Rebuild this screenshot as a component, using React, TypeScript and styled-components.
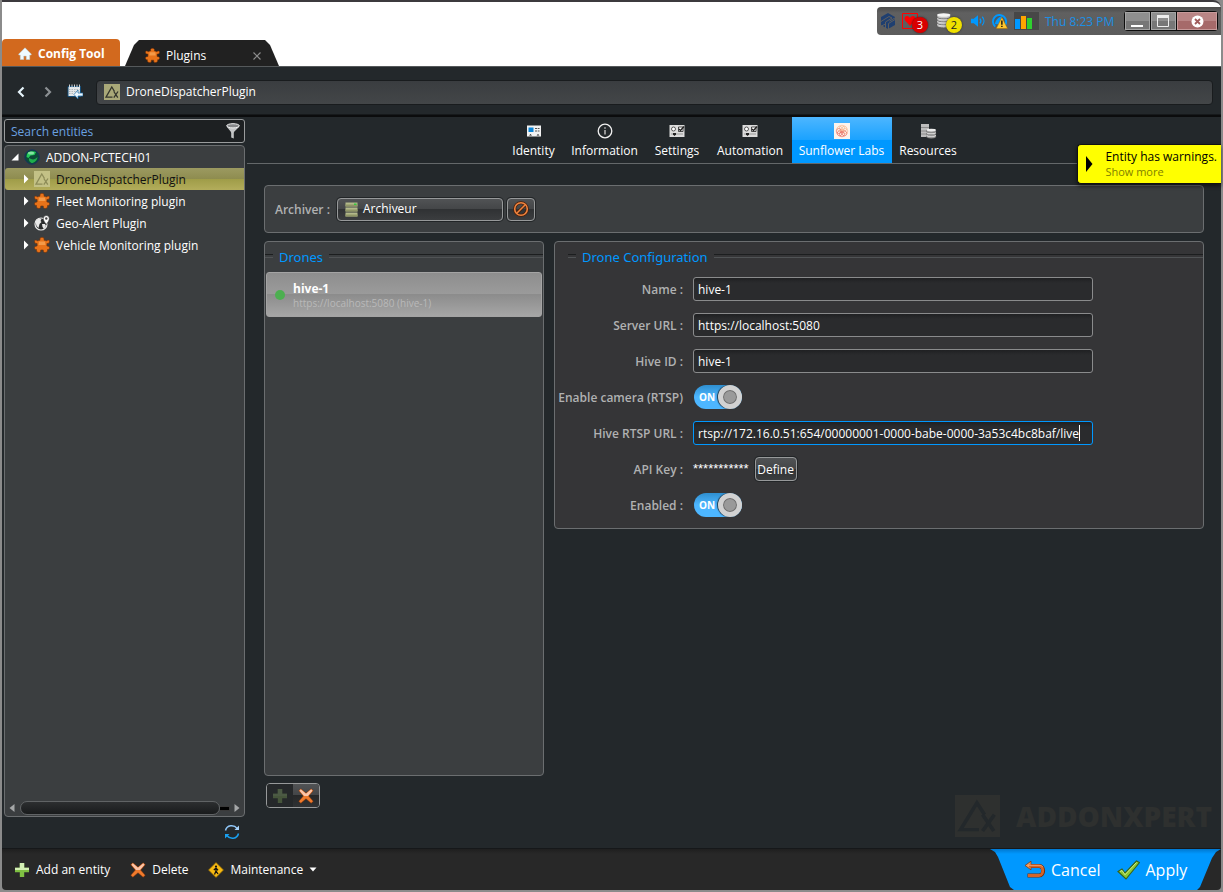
import React, { useState } from "react";
import styled, { createGlobalStyle, css } from "styled-components";

const ink = {
  window: "#23282b",
  panel: "#3b3e40",
  config: "#353537",
  line: "#6b6e70",
  blue: "#0098ff",
  label: "#b0b1b2",
};

const GlobalStyle = createGlobalStyle`
  * { box-sizing: border-box; }
  html, body { margin: 0; padding: 0; background: #8b8b8b; }
  body, button, input {
    font-family: "Open Sans", "Noto Sans", "Liberation Sans", sans-serif;
    font-size: 12px;
    line-height: 16px;
    color: #fff;
  }
  button { margin: 0; padding: 0; border: 0; background: none; cursor: pointer; }
  svg { display: block; flex: none; }
`;

/* ---------- window frame ---------- */

const Frame = styled.div`
  display: flex;
  flex-direction: column;
  min-height: 100vh;
  border: solid #8b8b8b;
  border-width: 0 2px 2px;
`;

const TitleBar = styled.header`
  display: flex;
  justify-content: space-between;
  align-items: flex-start;
  height: 67px;
  background: #fff;
  border-top: 2px solid #3c3a3e;
  border-bottom: 1px solid #55595b;
  border-radius: 0 8px 0 0;
`;

const WindowTabs = styled.nav`
  display: flex;
  align-items: flex-end;
  align-self: stretch;
  gap: 5px;
`;

const HomeTab = styled.button`
  display: flex;
  align-items: center;
  gap: 6px;
  width: 118px;
  height: 27px;
  padding: 2px 0 0 16px;
  border-radius: 4px 4px 0 0;
  background: #d2691e;
  font-weight: 700;
  white-space: nowrap;
`;

const PageTab = styled.div`
  display: flex;
  align-items: center;
  width: 154px;
  height: 26px;
  padding: 5px 17px 0 20px;
  background: #212121;
  clip-path: polygon(0 100%, 9px 5px, 14px 0, calc(100% - 14px) 0, calc(100% - 9px) 5px, 100% 100%);
`;

const PageTabName = styled.span`
  flex: 1;
  padding-left: 6px;
`;

const Tray = styled.div`
  display: flex;
  align-items: center;
  height: 28px;
  margin: 5px 0 0;
  padding: 0 3px;
  border-radius: 4px 0 0 4px;
  background: linear-gradient(#4a4a4a, #606060 6px, #5c5c5c);
`;

const TrayItems = styled.div`
  display: flex;
  align-items: center;
  gap: 6px;
`;

const BadgeHost = styled.span`
  position: relative;
  display: block;
  width: 28px;
`;

const Badge = styled.span<{ $bg: string; $fg: string }>`
  position: absolute;
  right: 2px;
  top: 4px;
  width: 16px;
  height: 16px;
  border-radius: 50%;
  box-shadow: 0 0 2px #222;
  background: ${(p) => p.$bg};
  color: ${(p) => p.$fg};
  font-size: 11px;
  line-height: 16px;
  text-align: center;
`;

const Clock = styled.time`
  width: 68px;
  margin: 0 11px 0 6px;
  padding-top: 2px;
  color: #1b8fe4;
  white-space: nowrap;
`;

const WindowButtons = styled.div`
  display: flex;
  gap: 1px;
  height: 20px;
  padding: 1px;
  border-radius: 4px;
  overflow: hidden;
  background: #0c0c0c;
`;

const WindowButton = styled.button<{ $danger?: boolean }>`
  display: flex;
  align-items: center;
  justify-content: center;
  width: ${(p) => (p.$danger ? 40 : 25)}px;
  border: 1px solid ${(p) => (p.$danger ? "#c79a9a" : "#a5a5a5")};
  background: ${(p) =>
    p.$danger ? "linear-gradient(#b98585 50%, #a66a6a 50%)" : "linear-gradient(#8f8f8f 50%, #777 50%)"};
`;

const AddressBar = styled.div`
  display: flex;
  align-items: center;
  height: 48px;
  padding: 3px 8px 0 5px;
  background: ${ink.window};
  border-bottom: 1px solid #16191b;
`;

const NavButton = styled.button`
  display: flex;
  justify-content: center;
  width: 27px;
`;

const Address = styled.div`
  display: flex;
  align-items: center;
  gap: 6px;
  flex: 1;
  height: 25px;
  margin-left: 8px;
  padding-left: 7px;
  border: 1px solid #191c1e;
  border-radius: 4px;
  background: linear-gradient(#3a3d40, #434648);
`;

/* ---------- sidebar ---------- */

const Body = styled.div`
  display: flex;
  flex: 1;
  border-top: 2px solid #0b0c0d;
  background: ${ink.window};
`;

const Sidebar = styled.aside`
  display: flex;
  flex-direction: column;
  flex: none;
  width: 245px;
  padding: 2px 2px 8px;
`;

const SearchBox = styled.label`
  display: flex;
  align-items: center;
  height: 24px;
  padding: 0 4px 0 6px;
  border: 1px solid #9a9c9d;
  border-radius: 3px;
  background: #1d2022;
`;

const SearchInput = styled.input`
  flex: 1;
  min-width: 0;
  padding: 2px 0 0;
  border: 0;
  outline: 0;
  background: none;
  &::placeholder { color: #6aa0e0; opacity: 1; }
`;

const TreePanel = styled.div`
  display: flex;
  flex-direction: column;
  flex: 1;
  margin-top: 2px;
  border: 1px solid ${ink.line};
  border-radius: 4px;
  background: ${ink.panel};
`;

const Tree = styled.ul`
  flex: 1;
  margin: 0;
  padding: 0;
  list-style: none;
`;

const TreeRow = styled.li<{ $root?: boolean; $selected?: boolean }>`
  display: flex;
  align-items: center;
  height: 22px;
  padding-left: ${(p) => (p.$root ? 6 : 17)}px;
  ${(p) =>
    p.$selected &&
    css`
      color: #111;
      border-radius: 3px 0 0 3px;
      background: linear-gradient(#9c9a61, #8e8c4f 50%, #9f9c48 50%, #b3ad5b);
    `}
`;

const TreeName = styled.span`
  padding: 2px 0 0 6px;
`;

const TreeIcon = styled.span<{ $gap: number }>`
  padding-left: ${(p) => p.$gap}px;
`;

const ScrollRow = styled.div`
  display: flex;
  align-items: center;
  height: 16px;
  padding: 0 4px;
`;

const ScrollTrack = styled.div`
  display: flex;
  align-items: center;
  flex: 1;
  margin: 0 4px 0 5px;
`;

const ScrollThumb = styled.div`
  flex: 1;
  height: 14px;
  border: 1px solid #606365;
  border-radius: 7px;
  background: linear-gradient(#2c2e30, #191b1c);
`;

const ScrollRest = styled.div`
  width: 10px;
  height: 5px;
  background: #000;
  border: 1px solid #3a3a3a;
  border-left: 0;
`;

const RefreshButton = styled.button`
  align-self: flex-end;
  margin: 7px 5px 0 0;
`;

/* ---------- main area ---------- */

const Main = styled.main`
  display: flex;
  flex-direction: column;
  flex: 1;
  min-width: 0;
  position: relative;
`;

const PageTabs = styled.nav`
  display: flex;
  justify-content: center;
  height: 47px;
  border-bottom: 1px solid #64686a;
`;

const PageTabButton = styled.button<{ $w: number; $active?: boolean }>`
  display: flex;
  flex-direction: column;
  align-items: center;
  gap: 4px;
  width: ${(p) => p.$w}px;
  padding-top: 6px;
  white-space: nowrap;
  ${(p) => p.$active && "background: linear-gradient(#4db6ff, #1aa2ff 50%, #0098ff 50%);"}
`;

const Warning = styled.div`
  position: absolute;
  top: 27px;
  right: 0;
  display: flex;
  align-items: center;
  gap: 12px;
  height: 40px;
  padding: 0 4px 0 8px;
  border: 1px solid #111;
  border-right: 0;
  border-radius: 4px 0 0 4px;
  box-shadow: 0 2px 4px rgba(0, 0, 0, 0.6);
  background: #ff0;
  color: #000;
  white-space: nowrap;
`;

const WarningText = styled.div`
  display: flex;
  flex-direction: column;
  align-items: flex-start;
  line-height: 15px;
`;

const ShowMore = styled.a`
  color: #808000;
  font-size: 11px;
  text-decoration: none;
`;

const Content = styled.div`
  display: flex;
  flex-direction: column;
  flex: 1;
  gap: 8px;
  padding: 21px 17px 11px;
`;

const Panel = styled.section<{ $tone: string }>`
  border: 1px solid ${ink.line};
  border-radius: 4px;
  background: ${(p) => p.$tone};
`;

const ArchiverPanel = styled(Panel)`
  display: flex;
  align-items: center;
  height: 48px;
  padding: 0 10px;
`;

const FieldName = styled.span`
  color: ${ink.label};
  font-weight: 600;
`;

const ArchiverName = styled(FieldName)`
  width: 62px;
  padding-top: 2px;
`;

const DarkButton = styled.button`
  display: flex;
  align-items: center;
  border: 1px solid #97999a;
  border-radius: 4px;
  box-shadow: 0 0 0 1px #222527;
  background: linear-gradient(#515355, #434547 50%, #303234 50%, #3b3d3f);
`;

const PickerButton = styled(DarkButton)`
  gap: 5px;
  width: 166px;
  height: 23px;
  padding-left: 7px;
`;

const ClearButton = styled(DarkButton)`
  justify-content: center;
  width: 28px;
  height: 23px;
  margin-left: 4px;
`;

const Columns = styled.div`
  display: flex;
  align-items: stretch;
  flex: 1;
  gap: 10px;
`;

const DroneColumn = styled.div`
  display: flex;
  flex-direction: column;
  flex: none;
  gap: 7px;
  width: 280px;
  padding-bottom: 29px;
`;

const DronePanel = styled(Panel)`
  flex: 1;
`;

const ConfigColumn = styled.div`
  display: flex;
  flex-direction: column;
  justify-content: space-between;
  flex: 1;
  min-width: 0;
`;

const ConfigPanel = styled(Panel)`
  height: 288px;
`;

const Legend = styled.h2<{ $inset: number }>`
  display: flex;
  align-items: center;
  gap: 6px;
  margin: 0;
  padding: 5px 0 5px ${(p) => p.$inset}px;
  color: ${ink.blue};
  font-family: "Noto Sans", "Open Sans", sans-serif;
  font-size: 13px;
  font-weight: 400;
  line-height: 20px;
  &::before, &::after {
    content: "";
    width: 8px;
    height: 2px;
    margin-bottom: 2px;
    border-top: 1px solid #1c1e1f;
    border-bottom: 1px solid #505355;
  }
  &::after { flex: 1; }
`;

const DroneList = styled.ul`
  margin: 0;
  padding: 0 1px;
  list-style: none;
`;

const DroneItem = styled.li`
  display: flex;
  align-items: center;
  gap: 8px;
  height: 45px;
  padding-left: 8px;
  border: 1px solid #a4a4a4;
  border-radius: 3px;
  background: linear-gradient(#8e8e8e, #9b9b9b 50%, #8c8c8c 50%, #a6a6a6);
`;

const StatusDot = styled.span`
  width: 10px;
  height: 10px;
  border-radius: 50%;
  background: #4caf50;
`;

const DroneText = styled.div`
  display: flex;
  flex-direction: column;
  padding-top: 3px;
  line-height: 15px;
`;

const DroneName = styled.strong`
  font-weight: 700;
`;

const DroneUrl = styled.span`
  color: #b9b9b9;
  font-size: 10px;
`;

const AddRemove = styled.div`
  display: flex;
  align-self: flex-start;
  height: 25px;
  margin-left: 2px;
  border: 1px solid #97999a;
  border-radius: 4px;
  overflow: hidden;
`;

const AddRemoveButton = styled.button<{ $dim?: boolean }>`
  display: flex;
  align-items: center;
  justify-content: center;
  width: 26px;
  background: ${(p) =>
    p.$dim ? "#25282a" : "linear-gradient(#515355, #434547 50%, #262829 50%, #303234)"};
`;

const Form = styled.form`
  display: grid;
  grid-template-columns: 128px 1fr;
  grid-auto-rows: 24px;
  gap: 12px 10px;
  align-items: center;
  padding: 5px 0 0;
`;

const FormName = styled.label`
  padding-top: 2px;
  color: ${ink.label};
  font-weight: 600;
  text-align: right;
  white-space: nowrap;
`;

const TextField = styled.span<{ $focus?: boolean }>`
  display: flex;
  align-items: center;
  width: 400px;
  max-width: 100%;
  height: 24px;
  padding: 0 4px;
  border: 1px solid ${(p) => (p.$focus ? ink.blue : "#8a8b8c")};
  border-radius: 3px;
  background: linear-gradient(#1f2022, #2a2b2d 5px);
`;

const TextInput = styled.input<{ $fit?: boolean }>`
  ${(p) => (p.$fit ? "field-sizing: content;" : "flex: 1;")}
  min-width: 0;
  padding: 2px 0 0;
  border: 0;
  outline: 0;
  background: none;
  caret-color: transparent;
`;

const Caret = styled.span`
  width: 1px;
  height: 16px;
  background: #fff;
`;

const SwitchInput = styled.input`
  appearance: none;
  position: absolute;
  inset: 0;
  margin: 0;
  cursor: pointer;
`;

const SwitchTrack = styled.span<{ $on: boolean }>`
  position: relative;
  display: flex;
  flex-direction: ${(p) => (p.$on ? "row" : "row-reverse")};
  align-items: center;
  justify-content: space-between;
  width: 48px;
  height: 24px;
  margin-left: 1px;
  padding-left: ${(p) => (p.$on ? 5 : 0)}px;
  border-radius: 12px;
  background: ${(p) => (p.$on ? "linear-gradient(#2f8fd0, #4db6ff 50%)" : "#666")};
  font-size: 10px;
  font-weight: 700;
`;

const SwitchKnob = styled.span`
  width: 24px;
  height: 24px;
  border: 5px solid #d2d2d2;
  border-radius: 50%;
  box-shadow: inset 0 0 0 1px #6e6e6e, -1px 0 1px #1d3a50;
  background: #9a9a9a;
`;

const KeyRow = styled.div`
  display: flex;
  align-items: center;
  gap: 6px;
`;

const MaskedKey = styled.span`
  font-family: "Liberation Sans", sans-serif;
  font-size: 13px;
`;

const DefineButton = styled(DarkButton)`
  justify-content: center;
  width: 42px;
  height: 24px;
  padding-top: 2px;
`;

const Watermark = styled.div`
  display: flex;
  align-items: center;
  align-self: flex-end;
  gap: 16px;
  margin-right: -8px;
  color: #2e302f;
  font-size: 28px;
  font-weight: 800;
  line-height: 42px;
`;

/* ---------- footer ---------- */

const Footer = styled.footer`
  display: flex;
  justify-content: space-between;
  height: 42px;
  border-top: 1px solid #16181a;
  border-radius: 0 0 4px 4px;
  background: linear-gradient(#1f1f1f, #282828 5px);
`;

const Actions = styled.div`
  display: flex;
  align-items: center;
  gap: 20px;
  padding-left: 12px;
`;

const ActionButton = styled.button`
  display: flex;
  align-items: center;
  gap: 6px;
`;

const Confirm = styled.div`
  display: flex;
  align-items: center;
  gap: 17px;
  width: 231px;
  padding: 0 0 0 34px;
  background: linear-gradient(#0078d0, #0098ff 5px);
  clip-path: polygon(
    0 0, 100% 0, calc(100% - 5px) 3px, calc(100% - 9px) 9px, calc(100% - 21px) 38px, calc(100% - 24px) 100%,
    24px 100%, 20px 38px, 8px 8px, 5px 3px
  );
`;

const ConfirmButton = styled.button`
  display: flex;
  align-items: center;
  gap: 5px;
  font-size: 16px;
  line-height: 22px;
`;

/* ---------- drawings ---------- */

const HomeIcon = () => (
  <svg width="14" height="14" viewBox="0 0 14 14">
    <path d="M7 .8.8 7v1h1.500v4.500h3.400V9h2.600v3.500h3.400V8h1.500V7z" fill="#f0faff" stroke="#b9d3de" strokeWidth=".5" />
  </svg>
);

const PuzzleIcon = ({ size = 15 }: { size?: number }) => (
  <svg width={size} height={size} viewBox="0 0 16 16">
    <path
      d="M6 3.200C5.400 1.200 6.500.300 8 .300s2.600.900 2 2.900c1.200 0 2 .2 2.600.8.700-1.400 2.900-1.200 2.900.500 0 1.400-1 2.200-2.600 2v2.500c2 0 2.800.800 2.600 2.200-.2 1.200-1.300 1.400-2 1.300.200 1.800-.500 3-2.300 3-1.700 0-2.200-1.100-1.900-2.500H6.700c.3 1.400-.2 2.500-1.900 2.500-1.800 0-2.500-1.200-2.300-3-.7.100-1.800-.1-2-1.300C.3 9.800 1.100 9 3.100 9V6.500C1.500 6.700.5 5.900.5 4.500c0-1.700 2.200-1.900 2.900-.5.6-.6 1.400-.8 2.600-.8z"
      fill="#e8731a"
      stroke="#6f2f08"
      strokeWidth=".6"
    />
    <path d="M5 4.500h6l.5 3.500h-7z" fill="#f9ab5c" opacity=".7" />
  </svg>
);

const TriangleXIcon = ({
  width = 16,
  height = 16,
  bg = "#a9a878",
  fg = "#33352c",
}: {
  width?: number;
  height?: number;
  bg?: string;
  fg?: string;
}) => (
  <svg width={width} height={height} viewBox="0 0 16 16" preserveAspectRatio="none">
    <path d="M0 0h16v16H0z" fill={bg} />
    <path d="M10.500 7.500 7.800 3 2 13.200h6.500" fill="none" stroke={fg} strokeWidth="1.300" />
    <path d="m9.800 7.500 4 6.200M14 7.500l-4.200 6.200" stroke={fg} strokeWidth="1.300" />
  </svg>
);

const CalendarIcon = () => (
  <svg width="16" height="16" viewBox="0 0 16 16">
    <path d="M1 2.500h12.500V12.500H1z" fill="#e4e8ea" stroke="#134d78" />
    <path d="M2.500.5v3M5 .5v3M7.500.5v3M10 .5v3M12.500.5v3" stroke="#d0d4d6" />
    <path d="M2 5.500h10.500M2 7.500h10.500M2 9.500h5" stroke="#a3abb0" strokeWidth=".8" strokeDasharray="1.500 1" />
    <path d="m7 10.500 4-4.500V9h5v3h-5v3z" fill="#eef8ff" stroke="#1a6aa5" strokeWidth=".7" />
  </svg>
);

const ChevronIcon = ({ back, color }: { back?: boolean; color: string }) => (
  <svg width="12" height="14" viewBox="0 0 12 14">
    <path d={back ? "M8.500 2.500 4 7l4.500 4.500" : "M3.500 2.500 8 7l-4.500 4.500"} fill="none" stroke={color} strokeWidth="2.200" />
  </svg>
);

const CubeIcon = () => (
  <svg width="16" height="16" viewBox="0 0 16 16">
    <path d="M8 0 15 4v8l-7 4-7-4V4z" fill="#1f3f70" />
    <path d="M1 8.500 9 3.500l3 1.500-6.500 4v2l-4 2M15 6.500 8.500 10.500V16M5.500 11v4M9.500 8 15 5" fill="none" stroke="#5e5e5e" strokeWidth="1" />
  </svg>
);

const HeartIcon = () => (
  <svg width="16" height="16" viewBox="0 0 16 16">
    <path d="M.5.5h15v15H.5z" fill="none" stroke="#f00" />
    <path d="M8 13 3.500 8C1.500 5.500 3 3 5 3c1.600 0 2.500 1 3 2 .5-1 1.400-2 3-2 2 0 3.500 2.500 1.500 5z" fill="#f00" />
  </svg>
);

const DatabaseIcon = () => (
  <svg width="16" height="16" viewBox="0 0 16 16">
    {[11, 8, 5, 2].map((y) => (
      <g key={y}>
        <path d={`M1 ${y}v1.800c0 2.800 13.500 2.800 13.500 0V${y}z`} fill="#c4c4c4" stroke="#555" strokeWidth=".8" />
        <ellipse cx="7.750" cy={y} rx="6.750" ry="1.700" fill="#f4f4f4" />
      </g>
    ))}
  </svg>
);

const SpeakerIcon = () => (
  <svg width="16" height="16" viewBox="0 0 17 16">
    <path d="M1 5.500h3L8.500 2v12L4 10.500H1z" fill={ink.blue} />
    <path d="M10.500 5.500c1.300 1.500 1.300 3.500 0 5M13 3.500c2.400 2.600 2.400 6.400 0 9" fill="none" stroke={ink.blue} strokeWidth="1.300" />
  </svg>
);

const GaugeIcon = () => (
  <svg width="16" height="16" viewBox="0 0 17 17">
    <path d="M3.500 14.500a7 7 0 1 1 10-1" fill="#4a5c68" stroke={ink.blue} strokeWidth="2" />
    <path d="M3 12c1-5 4-8 8-8.500L7 12z" fill={ink.blue} />
    <path d="m10.500 4.500 6 12h-12z" fill="#ffc52c" stroke="#a86a00" strokeWidth=".5" />
    <path d="M10.500 8v4.500M10.500 13.500V15" stroke="#111" strokeWidth="1.500" />
  </svg>
);

const BarsIcon = () => (
  <svg width="25" height="18" viewBox="0 0 25 18">
    <path d="M0 0h25v18H0z" fill="#474747" />
    <path d="M1 7h5v10H1z" fill="#0098ff" />
    <path d="M7 4h5v13H7z" fill="#ffa500" />
    <path d="M13 6h5v11h-5z" fill="#2fd02f" />
  </svg>
);

const FunnelIcon = () => (
  <svg width="14" height="16" viewBox="0 0 14 16">
    <path d="M.8 3c0 2 4.400 5 4.400 7v4.500l2.600 1V10c0-2 5.400-5 5.400-7z" fill="#c3c5c6" />
    <ellipse cx="7" cy="2.800" rx="6.300" ry="2.100" fill="#858789" stroke="#f2f2f2" />
  </svg>
);

const Twisty = ({ open }: { open?: boolean }) => (
  <svg width="8" height="10" viewBox="0 0 8 10">
    <path d={open ? "M7.500 1.500v7h-7z" : "M2 .5 6.500 5 2 9.500z"} fill="#fff" />
  </svg>
);

const DirectoryIcon = () => (
  <svg width="16" height="16" viewBox="0 0 16 16">
    <circle cx="8" cy="8" r="7.200" fill="#0d4a38" stroke="#17335e" />
    <path d="M3 5c1.500-3 6-3.500 9-2l-1.500 3-4 .5-2 2.500-2-1z" fill="#23c95a" />
    <path d="M5 9c3 2 6 2 8.500-1-.5 3.500-3 6-6 6C5.500 13 4.500 11 5 9z" fill="#1eae4c" />
    <ellipse cx="7" cy="4" rx="3" ry="1.500" fill="#aef0c0" opacity=".7" />
  </svg>
);

const GlobePinIcon = () => (
  <svg width="16" height="16" viewBox="0 0 16 16">
    <circle cx="7" cy="9" r="6" fill="#2b2d2e" stroke="#e8e8e8" strokeWidth="1.200" />
    <path d="M1.500 7c1-3 4-4 6-3l-1 2 1 1-2 2-1 4-2-2z" fill="#e8e8e8" />
    <path d="m8 9 3 0 1 2-2 3-1.500-2z" fill="#e8e8e8" />
    <path d="M12.300 9.500C10.500 7 9.300 5.500 9.300 3.500a3 3 0 0 1 6 0c0 2-1.200 3.500-3 6z" fill="#fff" stroke="#333" strokeWidth=".6" />
    <circle cx="12.300" cy="3.500" r="1.200" fill="#444" />
  </svg>
);

const ArrowIcon = ({ left }: { left?: boolean }) => (
  <svg width="6" height="8" viewBox="0 0 6 8">
    <path d={left ? "M5.500 0v8L.5 4z" : "M.5 0v8l5-4z"} fill="#a5a7a8" />
  </svg>
);

const RefreshIcon = () => (
  <svg width="16" height="16" viewBox="0 0 16 16">
    <path d="M1.500 6.500C2.800 1 9.800.2 13.200 4.500" fill="none" stroke="#8fc6f7" strokeWidth="1.500" />
    <path d="M15 1.500v4.500h-4.500z" fill="#a8d2f8" />
    <path d="M14.500 9.500C13.200 15 6.200 15.800 2.800 11.500" fill="none" stroke="#19a0f0" strokeWidth="1.500" />
    <path d="M1 14.500V10h4.500z" fill="#19a0f0" />
  </svg>
);

const IdentityIcon = () => (
  <svg width="16" height="16" viewBox="0 0 16 16">
    <path d="M1 2.500h14v11H1z" fill="#f2f2f2" />
    <path d="M2.500 4.500h5v4.500h-5z" fill="#0a84d6" />
    <path d="M9 5.500h4.500M9 8h4.500" stroke="#555" strokeDasharray="2 .7" />
    <path d="M3 12.500 4.500 11 6 12.500zM10.500 12.500 12 11l1.500 1.500z" fill="#222" />
  </svg>
);

const InfoIcon = () => (
  <svg width="16" height="16" viewBox="0 0 16 16">
    <circle cx="8" cy="8" r="6.800" fill="none" stroke="#f0f0f0" strokeWidth="1.300" />
    <path d="M8 7v4.500M8 4.300v1.500" stroke="#a8a8a8" strokeWidth="1.700" />
  </svg>
);

const OptionsIcon = () => (
  <svg width="16" height="16" viewBox="0 0 16 16">
    <path d="M.5 2h15v12H.5z" fill="#dcdcdc" />
    <circle cx="4.500" cy="6" r="2" fill="#fff" stroke="#333" strokeWidth=".8" />
    <path d="M9.500 4H14v4.500H9.500z" fill="#fff" stroke="#222" strokeWidth=".8" />
    <path d="m10 6 1.500 1.500L15 3.500" fill="none" stroke="#222" strokeWidth="1.300" />
    <path d="M2 11h12" stroke="#999" />
    <path d="M4 10h3v1.500L5.500 13 4 11.500z" fill="#222" />
  </svg>
);

const FlowerIcon = () => (
  <svg width="16" height="16" viewBox="0 0 16 16">
    <path d="M0 0h16v16H0z" fill="#fdf3ec" />
    {[0, 45, 90, 135, 180, 225, 270, 315].map((a) => (
      <circle
        key={a}
        cx="8"
        cy="4.700"
        r="2.500"
        fill="none"
        stroke={a > 100 && a < 300 ? "#e4584a" : "#f6ae80"}
        strokeWidth=".6"
        transform={`rotate(${a} 8 8)`}
      />
    ))}
  </svg>
);

const ResourcesIcon = () => (
  <svg width="17" height="16" viewBox="0 0 17 16">
    <path d="M1 1h8v13H1z" fill="#bdbdbd" />
    <path d="M1 4.500h8M1 8h8M1 11h8" stroke="#8c8c8c" />
    {[12.500, 9.800, 7.100].map((y) => (
      <g key={y}>
        <path d={`M6.500 ${y}v1.300c0 2.200 9.500 2.200 9.500 0V${y}z`} fill="#9c9c9c" stroke="#4c4c4c" strokeWidth=".4" />
        <ellipse cx="11.250" cy={y} rx="4.750" ry="1.300" fill="#ededed" />
      </g>
    ))}
  </svg>
);

const ServerIcon = () => (
  <svg width="13" height="15" viewBox="0 0 13 15">
    {[0, 5, 10].map((y) => (
      <g key={y}>
        <path d={`M.5 ${y + 0.500}h12v4H.5z`} fill="#b3b98a" />
        <path d={`M.5 ${y + 2.500}h12v2H.5z`} fill="#8f9566" />
      </g>
    ))}
    <path d="M9 1.500h2.500v1.500H9z" fill="#35c840" />
  </svg>
);

const ForbidIcon = () => (
  <svg width="16" height="16" viewBox="0 0 16 16">
    <circle cx="8" cy="8" r="6.300" fill="none" stroke="#4a1d06" strokeWidth="3" />
    <path d="m4 12 8-8" stroke="#4a1d06" strokeWidth="3" />
    <circle cx="8" cy="8" r="6.300" fill="none" stroke="#ee8440" strokeWidth="1.600" />
    <path d="m4 12 8-8" stroke="#ee8440" strokeWidth="1.600" />
  </svg>
);

const PlusIcon = ({ dim }: { dim?: boolean }) => (
  <svg width="16" height="16" viewBox="0 0 16 16">
    <path d="M5.800 1h4.400v4.800H15v4.400h-4.800V15H5.800v-4.800H1V5.800h4.800z" fill={dim ? "#46553b" : "#7fc043"} />
    <path d="M5.800 1h4.400v4.800H15V8H1V5.800h4.800z" fill={dim ? "#4c5a44" : "#d3efb4"} />
  </svg>
);

const CrossIcon = () => (
  <svg width="16" height="16" viewBox="0 0 16 16">
    <path d="M.8 2.800 2.800.8 8 5.200 13.200.8l2 2L10.600 8l4.600 5.200-2 2L8 10.800l-5.200 4.400-2-2L5.400 8z" fill="#f07a2c" stroke="#8a3608" strokeWidth=".5" />
    <path d="M1.500 2.800 2.800 1.300 8 5.700l5.200-4.400 1.300 1.500L10 8H6z" fill="#fbc4a8" />
  </svg>
);

const MaintenanceIcon = () => (
  <svg width="16" height="16" viewBox="0 0 16 16">
    <path d="M8 .5 15.500 8 8 15.500.5 8z" fill="#f7b913" stroke="#8a6400" strokeWidth=".7" />
    <circle cx="8" cy="4.500" r="1.100" fill="#111" />
    <path d="M8 5.500v4M8 9l-1.500 3.500M8 9l2 3M5.800 8 8 6.200l2 2" fill="none" stroke="#111" strokeWidth="1.300" />
  </svg>
);

const CancelIcon = () => (
  <svg width="22" height="20" viewBox="0 0 22 20">
    <path d="M4 6h11c5.500 0 5.500 9.500 0 9.500H3.500" fill="none" stroke="#7a2c08" strokeWidth="4" />
    <path d="M7 1.200v8.600L1 5.500z" fill="#f29a55" stroke="#7a2c08" strokeWidth=".7" />
    <path d="M5 6h10c5 0 5 9.500 0 9.500H4" fill="none" stroke="#d4652a" strokeWidth="2.800" />
    <path d="M4 5.300h11c2 0 3.500.8 4 2" fill="none" stroke="#f6b083" strokeWidth=".8" />
  </svg>
);

const CheckIcon = () => (
  <svg width="23" height="20" viewBox="0 0 23 20">
    <path d="m1 11.500 4-2.500 3 4L19.500 1l3 1.500L9 19z" fill="#8cc832" stroke="#35631a" strokeWidth="1.100" />
    <path d="m3 11.500 2-1 3 4.300L19.500 2.500" fill="none" stroke="#cdea8a" strokeWidth="1" />
  </svg>
);

/* ---------- pieces with state ---------- */

const Switch = ({ id }: { id: string }) => {
  const [on, setOn] = useState(true);
  return (
    <SwitchTrack $on={on}>
      {on ? "ON" : "OFF"}
      <SwitchKnob />
      <SwitchInput id={id} type="checkbox" checked={on} onChange={(e) => setOn(e.target.checked)} />
    </SwitchTrack>
  );
};

const Field = ({ id, value, focus }: { id: string; value: string; focus?: boolean }) => (
  <TextField $focus={focus}>
    <TextInput id={id} type="text" defaultValue={value} $fit={focus} />
    {focus && <Caret />}
  </TextField>
);

const tabs = [
  { name: "Identity", width: 60, icon: <IdentityIcon /> },
  { name: "Information", width: 82, icon: <InfoIcon /> },
  { name: "Settings", width: 63, icon: <OptionsIcon /> },
  { name: "Automation", width: 83, icon: <OptionsIcon /> },
  { name: "Sunflower Labs", width: 100, icon: <FlowerIcon />, active: true },
  { name: "Resources", width: 73, icon: <ResourcesIcon /> },
];

const entities = [
  { name: "DroneDispatcherPlugin", icon: <TriangleXIcon bg="#c3c186" fg="#8d8c58" />, selected: true },
  { name: "Fleet Monitoring plugin", icon: <PuzzleIcon size={16} /> },
  { name: "Geo-Alert Plugin", icon: <GlobePinIcon /> },
  { name: "Vehicle Monitoring plugin", icon: <PuzzleIcon size={16} /> },
];

export default function App() {
  return (
    <Frame>
      <GlobalStyle />
      <TitleBar>
        <WindowTabs>
          <HomeTab type="button">
            <HomeIcon />
            Config Tool
          </HomeTab>
          <PageTab>
            <PuzzleIcon />
            <PageTabName>Plugins</PageTabName>
            <button type="button" aria-label="Close tab">
              <svg width="10" height="10" viewBox="0 0 10 10">
                <path d="m1.500 1.500 7 7M8.500 1.500l-7 7" stroke="#8c8c8c" strokeWidth="1.200" />
              </svg>
            </button>
          </PageTab>
        </WindowTabs>
        <Tray>
          <TrayItems>
            <CubeIcon />
            <BadgeHost>
              <HeartIcon />
              <Badge $bg="#d80000" $fg="#fff">3</Badge>
            </BadgeHost>
            <BadgeHost>
              <DatabaseIcon />
              <Badge $bg="#f0e000" $fg="#222">2</Badge>
            </BadgeHost>
            <SpeakerIcon />
            <GaugeIcon />
            <BarsIcon />
          </TrayItems>
          <Clock>Thu 8:23 PM</Clock>
          <WindowButtons>
            <WindowButton type="button" aria-label="Minimize">
              <svg width="13" height="13" viewBox="0 0 13 13">
                <path d="M0 10h12v2H0z" fill="#fff" />
              </svg>
            </WindowButton>
            <WindowButton type="button" aria-label="Maximize">
              <svg width="13" height="12" viewBox="0 0 13 12">
                <path d="M.5.500h11v11H.5z" fill="none" stroke="#eee" />
                <path d="M0 0h12v3H0z" fill="#eee" />
              </svg>
            </WindowButton>
            <WindowButton type="button" aria-label="Close" $danger>
              <svg width="13" height="13" viewBox="0 0 13 13">
                <circle cx="6.500" cy="6.500" r="6" fill="#fff" />
                <path d="m4 4 5 5M9 4 4 9" stroke="#a05c5c" strokeWidth="1.800" />
              </svg>
            </WindowButton>
          </WindowButtons>
        </Tray>
      </TitleBar>

      <AddressBar>
        <NavButton type="button" aria-label="Back"><ChevronIcon back color="#e6f4fb" /></NavButton>
        <NavButton type="button" aria-label="Forward"><ChevronIcon color="#8b9093" /></NavButton>
        <NavButton type="button" aria-label="History"><CalendarIcon /></NavButton>
        <Address>
          <TriangleXIcon />
          DroneDispatcherPlugin
        </Address>
      </AddressBar>

      <Body>
        <Sidebar>
          <SearchBox>
            <SearchInput type="text" placeholder="Search entities" aria-label="Search entities" />
            <FunnelIcon />
          </SearchBox>
          <TreePanel>
            <Tree>
              <TreeRow $root>
                <Twisty open />
                <TreeIcon $gap={5}><DirectoryIcon /></TreeIcon>
                <TreeName>ADDON-PCTECH01</TreeName>
              </TreeRow>
              {entities.map((e) => (
                <TreeRow key={e.name} $selected={e.selected}>
                  <Twisty />
                  <TreeIcon $gap={4}>{e.icon}</TreeIcon>
                  <TreeName>{e.name}</TreeName>
                </TreeRow>
              ))}
            </Tree>
            <ScrollRow>
              <ArrowIcon left />
              <ScrollTrack>
                <ScrollThumb />
                <ScrollRest />
              </ScrollTrack>
              <ArrowIcon />
            </ScrollRow>
          </TreePanel>
          <RefreshButton type="button" aria-label="Refresh"><RefreshIcon /></RefreshButton>
        </Sidebar>

        <Main>
          <PageTabs>
            {tabs.map((t) => (
              <PageTabButton key={t.name} type="button" $w={t.width} $active={t.active}>
                {t.icon}
                {t.name}
              </PageTabButton>
            ))}
          </PageTabs>

          <Content>
            <ArchiverPanel $tone={ink.panel}>
              <ArchiverName>Archiver :</ArchiverName>
              <PickerButton type="button">
                <ServerIcon />
                Archiveur
              </PickerButton>
              <ClearButton type="button" aria-label="Clear archiver"><ForbidIcon /></ClearButton>
            </ArchiverPanel>

            <Columns>
              <DroneColumn>
                <DronePanel $tone={ink.panel}>
                  <Legend $inset={0}>Drones</Legend>
                  <DroneList>
                    <DroneItem>
                      <StatusDot />
                      <DroneText>
                        <DroneName>hive-1</DroneName>
                        <DroneUrl>https://localhost:5080 (hive-1)</DroneUrl>
                      </DroneText>
                    </DroneItem>
                  </DroneList>
                </DronePanel>
                <AddRemove>
                  <AddRemoveButton type="button" aria-label="Add drone" $dim><PlusIcon dim /></AddRemoveButton>
                  <AddRemoveButton type="button" aria-label="Remove drone"><CrossIcon /></AddRemoveButton>
                </AddRemove>
              </DroneColumn>

              <ConfigColumn>
                <ConfigPanel $tone={ink.config}>
                  <Legend $inset={13}>Drone Configuration</Legend>
                  <Form>
                    <FormName htmlFor="name">Name :</FormName>
                    <Field id="name" value="hive-1" />
                    <FormName htmlFor="server">Server URL :</FormName>
                    <Field id="server" value="https://localhost:5080" />
                    <FormName htmlFor="hive">Hive ID :</FormName>
                    <Field id="hive" value="hive-1" />
                    <FormName htmlFor="camera">Enable camera (RTSP)</FormName>
                    <Switch id="camera" />
                    <FormName htmlFor="rtsp">Hive RTSP URL :</FormName>
                    <Field id="rtsp" value="rtsp://172.16.0.51:654/00000001-0000-babe-0000-3a53c4bc8baf/live" focus />
                    <FormName htmlFor="define">API Key :</FormName>
                    <KeyRow>
                      <MaskedKey>***********</MaskedKey>
                      <DefineButton id="define" type="button">Define</DefineButton>
                    </KeyRow>
                    <FormName htmlFor="enabled">Enabled :</FormName>
                    <Switch id="enabled" />
                  </Form>
                </ConfigPanel>
                <Watermark>
                  <TriangleXIcon width={45} height={42} bg="#2e302f" fg="#23282b" />
                  ADDONXPERT
                </Watermark>
              </ConfigColumn>
            </Columns>
          </Content>

          <Warning>
            <svg width="7" height="16" viewBox="0 0 7 16">
              <path d="M0 0v16l6.500-8z" fill="#000" />
            </svg>
            <WarningText>
              Entity has warnings.
              <ShowMore href="#warnings">Show more</ShowMore>
            </WarningText>
          </Warning>
        </Main>
      </Body>

      <Footer>
        <Actions>
          <ActionButton type="button"><PlusIcon />Add an entity</ActionButton>
          <ActionButton type="button"><CrossIcon />Delete</ActionButton>
          <ActionButton type="button">
            <MaintenanceIcon />
            Maintenance
            <svg width="8" height="5" viewBox="0 0 8 5"><path d="M.5.500h7L4 4.500z" fill="#fff" /></svg>
          </ActionButton>
        </Actions>
        <Confirm>
          <ConfirmButton type="button"><CancelIcon />Cancel</ConfirmButton>
          <ConfirmButton type="button"><CheckIcon />Apply</ConfirmButton>
        </Confirm>
      </Footer>
    </Frame>
  );
}
